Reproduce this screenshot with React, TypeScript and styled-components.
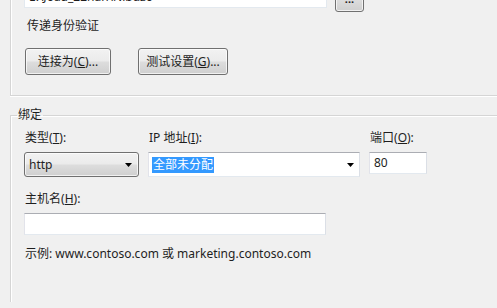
import React from 'react'
import styled, { createGlobalStyle } from 'styled-components'

const GlobalStyle = createGlobalStyle`
  html, body {
    margin: 0;
    padding: 0;
    background: #f0f0f0;
    overflow: hidden;
  }
  body {
    font-family: "Noto Sans", "Noto Sans CJK SC", sans-serif;
    font-size: 12px;
    color: #1e1e1e;
  }
`

const Arrow: React.FC = () => (
  <svg width="7" height="4" viewBox="0 0 7 4">
    <path d="M0 0h7L3.5 4z" fill="#000" />
  </svg>
)

const Key: React.FC<{ k: string }> = ({ k }) => (
  <>(<u>{k}</u>)</>
)

const App: React.FC = () => {
  return (
    <Page>
      <GlobalStyle />
      <UpperGroup>
        <PathRow>
          <PathInput>E:\Joad_22nan\Nibuzo</PathInput>
          <BrowseButton>...</BrowseButton>
        </PathRow>
        <Caption>传递身份验证</Caption>
        <ButtonRow>
          <Button $w={86}>连接为<Key k="C" />...</Button>
          <Button $w={90}>测试设置<Key k="G" />...</Button>
        </ButtonRow>
      </UpperGroup>

      <Group>
        <Legend>绑定</Legend>
        <FieldRow>
          <Field $w={115}>
            <Label>类型<Key k="T" />:</Label>
            <DropList>
              <span>http</span>
              <Arrow />
            </DropList>
          </Field>
          <Field $w={212}>
            <Label>IP 地址<Key k="I" />:</Label>
            <Combo>
              <Selected>全部未分配</Selected>
              <Arrow />
            </Combo>
          </Field>
          <Field $w={58}>
            <Label>端口<Key k="O" />:</Label>
            <TextBox>80</TextBox>
          </Field>
        </FieldRow>
        <HostBlock>
          <Label>主机名<Key k="H" />:</Label>
          <TextBox $w={302} />
        </HostBlock>
        <Hint>示例: www.contoso.com 或 marketing.contoso.com</Hint>
      </Group>
    </Page>
  )
}

export default App

const Page = styled.div`
  width: 497px;
  height: 308px;
  overflow: hidden;
`

const UpperGroup = styled.div`
  margin-left: 10px;
  padding: 0 0 20px 13px;
  border-left: 1px solid #d5d5d5;
  border-bottom: 1px solid #d5d5d5;
  box-shadow: inset 1px 0 #fff, 0 1px #fff;
`

const PathRow = styled.div`
  display: flex;
  align-items: flex-start;
  gap: 8px;
  margin-top: -14px;
`

const PathInput = styled.div`
  box-sizing: border-box;
  width: 303px;
  height: 22px;
  padding: 2px 4px;
  background: #fff;
  border: 1px solid #e3e9ef;
  border-top-color: #abadb3;
  line-height: 16px;
  white-space: nowrap;
  overflow: hidden;
`

const buttonFace = `
  border: 1px solid #707070;
  border-radius: 3px;
  background: linear-gradient(#f2f2f2 0%, #ebebeb 48%, #dddddd 52%, #cfcfcf 100%);
  box-shadow: inset 0 0 0 1px rgba(255, 255, 255, 0.7);
`

const BrowseButton = styled.div`
  ${buttonFace}
  box-sizing: border-box;
  width: 29px;
  height: 26px;
  display: flex;
  align-items: flex-end;
  justify-content: center;
  padding-bottom: 7px;
  line-height: 10px;
  font-weight: bold;
  font-size: 11px;
`

const Caption = styled.div`
  margin-top: 6px;
  padding-left: 3px;
  line-height: 16px;
`

const ButtonRow = styled.div`
  display: flex;
  gap: 27px;
  margin-top: 14px;
  padding-left: 1px;
`

const Button = styled.div<{ $w: number }>`
  ${buttonFace}
  box-sizing: border-box;
  width: ${(p) => p.$w}px;
  height: 27px;
  display: flex;
  align-items: center;
  justify-content: center;
  line-height: 16px;
`

const Group = styled.fieldset`
  margin: 11px 0 0 10px;
  padding: 0 0 40px 13px;
  border: none;
  border-top: 1px solid #d5d5d5;
  border-left: 1px solid #d5d5d5;
  box-shadow: inset 1px 1px #fff;
  min-inline-size: 0;
`

const Legend = styled.legend`
  margin-left: -7px;
  padding: 0 1px;
  line-height: 16px;
`

const FieldRow = styled.div`
  display: flex;
  gap: 9px;
  margin-top: 7px;
`

const Field = styled.div<{ $w: number }>`
  width: ${(p) => p.$w}px;
  display: flex;
  flex-direction: column;
  gap: 6px;
`

const Label = styled.div`
  padding-left: 1px;
  line-height: 16px;
`

const DropList = styled.div`
  ${buttonFace}
  box-sizing: border-box;
  height: 25px;
  display: flex;
  align-items: center;
  justify-content: space-between;
  padding: 0 6px 0 4px;
`

const Combo = styled.div`
  box-sizing: border-box;
  height: 25px;
  display: flex;
  align-items: center;
  justify-content: space-between;
  padding: 0 5px 0 3px;
  background: #fff;
  border: 1px solid #abadb3;
  border-color: #abadb3 #dbdfe6 #e3e9ef #e2e3ea;
`

const Selected = styled.span`
  background: #3399ff;
  color: #fff;
  line-height: 16px;
  padding: 0 1px;
`

const TextBox = styled.div<{ $w?: number }>`
  box-sizing: border-box;
  width: ${(p) => (p.$w ? `${p.$w}px` : 'auto')};
  height: 22px;
  padding: 2px 4px;
  line-height: 16px;
  background: #fff;
  border: 1px solid #e3e9ef;
  border-color: #abadb3 #dbdfe6 #e3e9ef #e2e3ea;
`

const HostBlock = styled.div`
  display: flex;
  flex-direction: column;
  gap: 6px;
  margin-top: 14px;
`

const Hint = styled.div`
  margin-top: 11px;
  padding-left: 1px;
  line-height: 16px;
`
